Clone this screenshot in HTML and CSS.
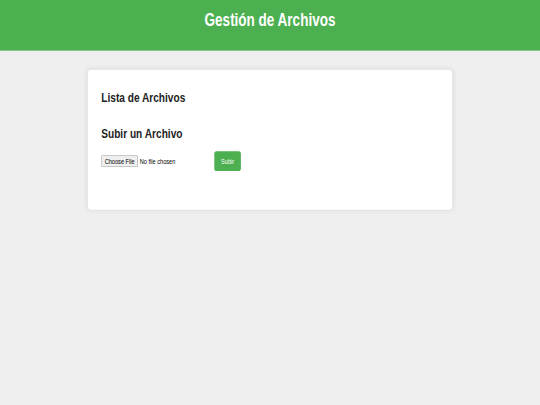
FILE: index.html
```html
<!DOCTYPE html>
<html lang="es">
<head>
<meta charset="utf-8">
<title>Gestión de Archivos</title>
<link rel="stylesheet" href="styles.css">
</head>
<body>
<div class="frame">
  <div class="viewport">
    <header class="site-header">
      <h1 class="site-title">Gestión de Archivos</h1>
    </header>
    <main class="card">
      <h2 class="section-title">Lista de Archivos</h2>
      <ul class="file-list"></ul>
      <h2 class="section-title">Subir un Archivo</h2>
      <form class="upload-form">
        <input class="file-input" type="file" name="archivo">
        <button class="upload-btn" type="submit">Subir</button>
      </form>
    </main>
  </div>
</div>
</body>
</html>
```

FILE: styles.css
```css
html, body {
  margin: 0;
  padding: 0;
  overflow: hidden;
  background: #efefef;
}

body {
  font-family: "Liberation Sans", Arial, Helvetica, sans-serif;
  color: #333;
}

/* Window-sized frame; the page inside is laid out at 1280x720 and shown scaled */
.frame {
  width: 540px;
  height: 405px;
  overflow: hidden;
}

.viewport {
  width: 1280px;
  height: 720px;
  background: #efefef;
  transform: scale(0.421875, 0.5625);
  transform-origin: 0 0;
}

.site-header {
  box-sizing: border-box;
  height: 90px;
  padding: 17px 16px 0;
  background: #4caf50;
  color: #fff;
  text-align: center;
}

.site-title {
  margin: 0;
  font-size: 32px;
  font-weight: bold;
}

.card {
  display: flex;
  flex-direction: column;
  box-sizing: border-box;
  max-width: 864px;
  margin: 34px auto 0;
  padding: 35px 32px 32px;
  background: #fff;
  border-radius: 8px;
  box-shadow: 0 0 10px rgba(0, 0, 0, 0.1);
}

.section-title {
  margin: 0 0 18px;
  font-size: 24px;
  font-weight: bold;
  color: #222;
}

.file-list {
  list-style: none;
  margin: 0 0 18px;
  padding: 0;
}

.upload-form {
  display: flex;
  align-items: center;
  gap: 10px;
  margin: 0 0 37px;
}

.file-input {
  width: 258px;
  font-family: "Liberation Sans", Arial, sans-serif;
  font-size: 13.33px;
  color: #000;
}

.upload-btn {
  padding: 10px 16px;
  border: none;
  border-radius: 5px;
  background: #4caf50;
  color: #fff;
  font-family: "Liberation Sans", Arial, sans-serif;
  font-size: 13.33px;
  cursor: pointer;
}
```
